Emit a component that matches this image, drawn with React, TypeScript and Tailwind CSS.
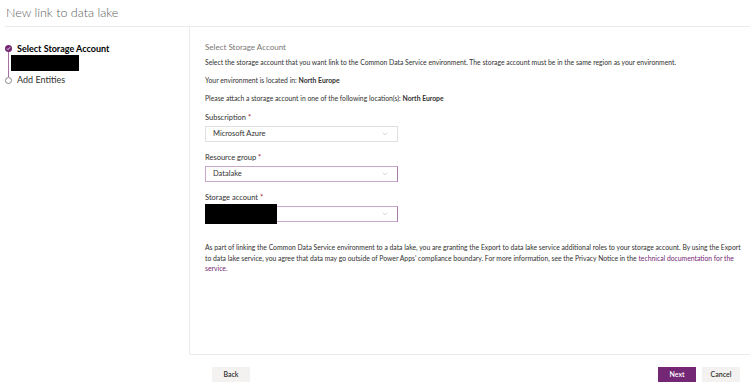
import { ChevronDown } from 'lucide-react';

const font = { fontFamily: 'Lato, "Open Sans", sans-serif' };

function Field({ label, value, active, redacted }: { label: string; value?: string; active?: boolean; redacted?: boolean }) {
  return (
    <div className="flex flex-col">
      <div className="text-[7.5px] leading-[10px] text-[#323130]">
        {label} <span className="text-[#a4262c]">*</span>
      </div>
      <div className="relative mt-[3px] w-[193px]">
        <div
          className={`flex h-[16px] items-center justify-between border pl-[7px] pr-[8px] ${
            active ? 'border-[#c8a6c8] border-r-[#a97aa9]' : 'border-[#e1dfdd]'
          }`}
        >
          <span className="text-[7.5px] text-[#323130]">{value}</span>
          <ChevronDown size={8} strokeWidth={1.2} className="text-[#a19f9d]" />
        </div>
        {redacted && <div className="absolute -top-[2px] left-0 h-[20px] w-[72px] bg-black" />}
      </div>
    </div>
  );
}

export default function App() {
  return (
    <div className="flex h-[387px] w-[750px] flex-col bg-white" style={font}>
      {/* Header */}
      <div className="ml-[5px] flex h-[27px] items-center border-b border-[#edebe9] pl-[1px]">
        <span className="text-[12.5px] font-light text-[#605e5c]">New link to data lake</span>
      </div>

      <div className="flex flex-1">
        {/* Steps */}
        <div className="w-[189px] pt-[16px]">
          <div className="flex">
            <div className="flex w-[17px] flex-col items-center pl-[1px] pr-[1px]">
              <div className="mt-[2px] flex h-[7px] w-[7px] items-center justify-center rounded-full bg-[#742774]">
                <svg width="5" height="5" viewBox="0 0 5 5">
                  <path d="M1 2.6 L2 3.6 L4 1.3" stroke="white" strokeWidth="0.9" fill="none" />
                </svg>
              </div>
              <div className="h-[25px] w-[1px] bg-[#a76ea7]" />
              <div className="h-[7px] w-[7px] rounded-full border border-[#8a8886] bg-white" />
            </div>
            <div className="flex flex-col">
              <span className="text-[9px] font-bold leading-[11px] text-black">Select Storage Account</span>
              <div className="-ml-[6px] mt-[1px] h-[16px] w-[68px] bg-black" />
              <span className="mt-[3px] text-[9px] leading-[12px] text-[#323130]">Add Entities</span>
            </div>
          </div>
        </div>

        {/* Content */}
        <div className="flex flex-1 flex-col border-b border-l border-[#edebe9] pl-[15px] pr-[6px] pt-[15px]">
          <div className="text-[8px] leading-[11px] text-[#797775]">Select Storage Account</div>
          <p className="mt-[4px] text-[6.8px] leading-[10px] text-[#323130]">
            Select the storage account that you want link to the Common Data Service environment. The storage account
            must be in the same region as your environment.
          </p>
          <p className="mt-[8px] text-[6.8px] leading-[10px] text-[#323130]">
            Your environment is located in: <b className="font-bold">North Europe</b>
          </p>
          <p className="mt-[8px] text-[6.8px] leading-[10px] text-[#323130]">
            Please attach a storage account in one of the following location(s): <b className="font-bold">North Europe</b>
          </p>
          <div className="mt-[10px] flex flex-col gap-[11px]">
            <Field label="Subscription" value="Microsoft Azure" />
            <Field label="Resource group" value="Datalake" active />
            <Field label="Storage account" active redacted />
          </div>
          <p className="mt-[20px] text-[6.8px] leading-[10.5px] text-[#323130]">
            As part of linking the Common Data Service environment to a data lake, you are granting the Export to data
            lake service additional roles to your storage account. By using the Export to data lake service, you agree
            that data may go outside of Power Apps' compliance boundary. For more information, see the Privacy Notice in
            the <a className="text-[#742774]">technical documentation for the service.</a>
          </p>
        </div>
      </div>

      {/* Footer */}
      <div className="flex h-[32px] items-start pl-[212px] pr-[10px] pt-[12px]">
        <button className="h-[15px] w-[38px] bg-[#f3f2f1] text-[7px] font-semibold text-[#323130]">Back</button>
        <div className="flex-1" />
        <button className="h-[15px] w-[38px] bg-[#742774] text-[7px] font-semibold text-white">Next</button>
        <button className="ml-[6px] h-[15px] w-[38px] bg-[#f3f2f1] text-[7px] font-semibold text-[#323130]">
          Cancel
        </button>
      </div>
    </div>
  );
}
